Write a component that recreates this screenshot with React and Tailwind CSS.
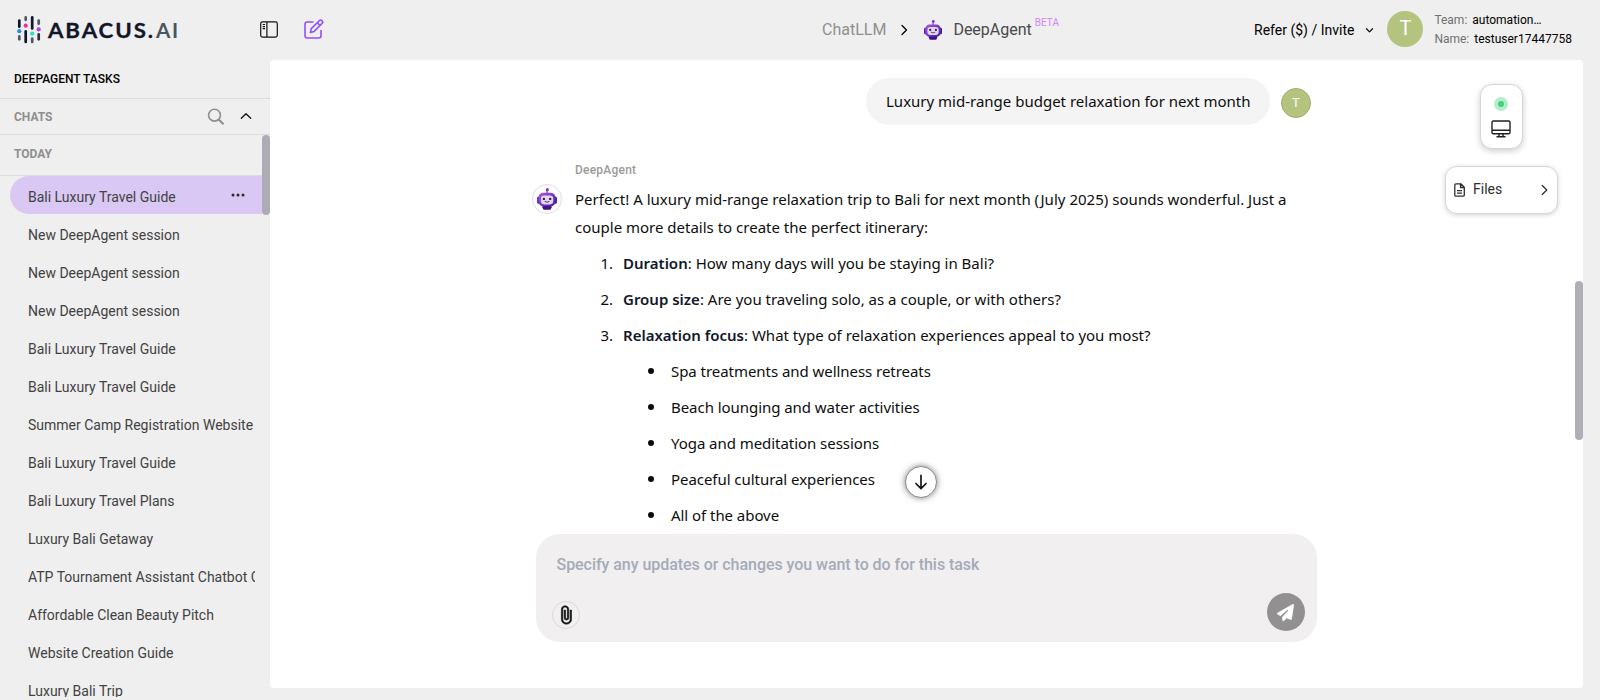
import { FaPaperPlane } from "react-icons/fa6";

const chats = [
  "New DeepAgent session",
  "New DeepAgent session",
  "New DeepAgent session",
  "Bali Luxury Travel Guide",
  "Bali Luxury Travel Guide",
  "Summer Camp Registration Website",
  "Bali Luxury Travel Guide",
  "Bali Luxury Travel Plans",
  "Luxury Bali Getaway",
  "ATP Tournament Assistant Chatbot Creation",
  "Affordable Clean Beauty Pitch",
  "Website Creation Guide",
  "Luxury Bali Trip",
];

const questions = [
  ["Duration", "How many days will you be staying in Bali?"],
  ["Group size", "Are you traveling solo, as a couple, or with others?"],
  ["Relaxation focus", "What type of relaxation experiences appeal to you most?"],
];

const options = [
  "Spa treatments and wellness retreats",
  "Beach lounging and water activities",
  "Yoga and meditation sessions",
  "Peaceful cultural experiences",
  "All of the above",
];

function Logo() {
  return (
    <svg width="164" height="32" viewBox="0 0 164 32" className="shrink-0">
      <g strokeWidth="2.700" strokeLinecap="round" fill="none">
        <path d="M3.300 6.600V12.700" stroke="#12162b" />
        <path d="M3.300 22.400V25.300" stroke="#4d5a66" />
        <path d="M9.700 3.400V5.800" stroke="#4d5a66" />
        <path d="M9.700 17.400V28" stroke="#12162b" />
        <path d="M16.200 3.400V14.500" stroke="#12162b" />
        <path d="M16.200 24.700V28" stroke="#4d5a66" />
        <path d="M22.700 6.600V9.700" stroke="#4d5a66" />
        <path d="M22.700 20.400V25.300" stroke="#2b3342" />
      </g>
      <circle cx="3.300" cy="17.200" r="2.100" fill="#1f8bff" />
      <circle cx="9.700" cy="11.700" r="2.100" fill="#e52fa5" />
      <circle cx="16.200" cy="19.600" r="2.100" fill="#27dfd5" />
      <circle cx="22.700" cy="15.300" r="2.100" fill="#b43cff" />
      <text x="32" y="24" fontFamily="Lato, sans-serif" fontSize="21" fontWeight="700" fill="#12162b" stroke="#12162b" strokeWidth=".3" letterSpacing="1.800" textLength="107" lengthAdjust="spacingAndGlyphs">ABACUS.</text>
      <text x="140" y="24" fontFamily="Lato, sans-serif" fontSize="21" fontWeight="700" fill="#4a5560" letterSpacing="1.800" textLength="24" lengthAdjust="spacingAndGlyphs">AI</text>
    </svg>
  );
}

function Robot({ size }) {
  return (
    <svg width={size} height={size} viewBox="0 0 20 20" className="shrink-0">
      <defs>
        <linearGradient id="robotBody" x1="0" y1="0" x2="1" y2="1">
          <stop offset="0" stopColor="#a855e8" />
          <stop offset="1" stopColor="#4c1aa0" />
        </linearGradient>
      </defs>
      <circle cx="10.300" cy="1.500" r="1.400" fill="#7c34cf" />
      <path d="M10.100 2.500V5" stroke="#5a25a8" strokeWidth="1" />
      <rect x="1" y="7.800" width="3" height="6.500" rx="1.400" fill="#5b21b6" />
      <rect x="16" y="7.800" width="3" height="6.500" rx="1.400" fill="#431496" />
      <path d="M5.800 15.800h8.400v1.800l-1 2.200H6.800l-1-2.200z" fill="#3d1287" />
      <rect x="2.300" y="4.400" width="15.400" height="12.300" rx="4.300" fill="url(#robotBody)" />
      <rect x="4.400" y="6.900" width="11.300" height="8" rx="3" fill="#e2d6ee" />
      <circle cx="7.200" cy="9.900" r="1.100" fill="#35204f" />
      <circle cx="12.900" cy="9.900" r="1.100" fill="#35204f" />
      <path d="M8.200 12.400q1.900 1.300 3.700 0" fill="none" stroke="#35204f" strokeWidth=".8" strokeLinecap="round" />
    </svg>
  );
}

function Chevron({ d, w, h, className }) {
  return (
    <svg width={w} height={h} viewBox={`0 0 ${w} ${h}`} className={className} fill="none" stroke="currentColor" strokeWidth="1.300" strokeLinecap="round" strokeLinejoin="round">
      <path d={d} />
    </svg>
  );
}

function Header() {
  return (
    <header className="flex h-[60px] shrink-0 items-start">
      <div className="flex w-[278px] shrink-0 pt-[14px] pl-[16px]">
        <Logo />
        <svg width="18" height="17" viewBox="0 0 18 17" className="mt-[7px] ml-[80px] shrink-0" fill="none" stroke="#111" strokeWidth="1.200">
          <rect x=".7" y=".9" width="16.600" height="15.200" rx="1.800" />
          <path d="M6.900 1v15M2.700 3.500H5M2.700 5.600H5M2.700 7.700H5" />
        </svg>
      </div>
      <div className="w-[544px] shrink-0 pt-[18px] pl-[25px]">
        <svg width="22" height="22" viewBox="0 0 22 22" fill="none" stroke="#9150fb" strokeWidth="1.600" strokeLinecap="round" strokeLinejoin="round">
          <path d="M10 4H4.200C2.800 4 2 4.800 2 6.200v11.600C2 19.200 2.800 20 4.200 20h11.600c1.400 0 2.200-.8 2.200-2.200v-5.300" />
          <path d="M7.400 14.600l.9-4 7.900-7.900a1.950 1.950 0 0 1 2.800 2.800l-7.900 7.900-3.700 1.200zM14.300 4.700l2.800 2.800" />
        </svg>
      </div>
      <div className="flex h-[60px] w-[432px] shrink-0 items-center text-base leading-5">
        <span className="text-[#8f8f8f]">ChatLLM</span>
        <Chevron w={8} h={12} d="M2 1.500L6.500 6L2 10.500" className="ml-[14px] text-black" />
        <span className="ml-[15px]"><Robot size={20} /></span>
        <span className="ml-[10px] text-[#4a4a4a]">DeepAgent</span>
        <span className="ml-[3px] -mt-[15px] text-[10px] leading-3 text-[#d585fa]">BETA</span>
      </div>
      <div className="flex h-[60px] items-center">
        <span className="text-sm text-black">Refer ($) / Invite</span>
        <Chevron w={9} h={7} d="M1.500 1.800L4.500 4.900L7.500 1.800" className="mt-px ml-[11px] text-[#111]" />
        <span className="mb-[2px] ml-[13px] flex size-[36px] items-center justify-center rounded-full bg-[#b4c47f] pb-[2px] text-[20px] text-white">T</span>
        <div className="ml-[11px] flex flex-col pb-[1px] text-[12px] leading-[19px]">
          <div className="flex gap-[5px]"><span className="text-[#6f6f6f]">Team:</span><span className="text-black">automation…</span></div>
          <div className="flex gap-[5px]"><span className="text-[#6f6f6f]">Name:</span><span className="text-black">testuser17447758</span></div>
        </div>
      </div>
    </header>
  );
}

function Sidebar() {
  return (
    <aside className="flex w-[270px] shrink-0 flex-col overflow-hidden">
      <div className="flex h-[39px] shrink-0 items-center border-b border-[#dcdcdc] pl-[14px] text-[12px] font-medium text-black">DEEPAGENT TASKS</div>
      <div className="flex h-[36px] shrink-0 items-center border-b border-[#dcdcdc] pr-[18px] pl-[14px] text-[12px] font-bold text-[#8e8e8e]">
        CHATS
        <svg width="18" height="18" viewBox="0 0 18 18" className="ml-auto" fill="none" stroke="#8e8e8e" strokeWidth="1.600">
          <circle cx="7.500" cy="7.200" r="5.900" />
          <path d="M11.700 11.500L16.500 16.200" strokeWidth="2" />
        </svg>
        <Chevron w={12} h={8} d="M1.300 6.200L6 1.700L10.700 6.200" className="mb-[2px] ml-[15px] text-[#111]" />
      </div>
      <div className="flex h-[562px] w-full shrink-0 overflow-hidden">
        <div className="flex w-[262px] shrink-0 flex-col">
          <div className="flex h-[41px] shrink-0 items-center border-b border-[#dcdcdc] pb-[3px] pl-[14px] text-[12px] font-bold text-[#8e8e8e]">TODAY</div>
          <div className="ml-[10px] flex h-[38px] shrink-0 items-center rounded-l-full bg-[#d8c8f3] pt-[3px] pr-[17px] pl-[18px] text-sm text-[#424242]">
            Bali Luxury Travel Guide
            <svg width="14" height="4" viewBox="0 0 14 4" className="mb-[4px] ml-auto" fill="#2b2b2b">
              <circle cx="2" cy="2" r="1.500" /><circle cx="7" cy="2" r="1.500" /><circle cx="12" cy="2" r="1.500" />
            </svg>
          </div>
          {chats.map((c, i) => (
            <div key={i} className="mr-[7px] ml-[28px] flex h-[38px] shrink-0 items-center overflow-hidden pt-[3px] text-sm whitespace-nowrap text-[#424242]">{c}</div>
          ))}
        </div>
        <div className="h-[80px] w-[8px] rounded-full bg-[#adacb5]" />
      </div>
    </aside>
  );
}

function Conversation() {
  return (
    <div className="flex h-[474px] flex-col overflow-hidden pl-[263px] text-[15px] text-[#0d0d0d]">
      <div className="flex w-[778px] items-center justify-end pt-[18px]">
        <div className="flex h-[47px] w-[404px] items-center rounded-full bg-[#f4f4f4] pb-px pl-[20px] font-['Noto_Sans',sans-serif] whitespace-nowrap">Luxury mid-range budget relaxation for next month</div>
        <span className="mt-[3px] ml-[11px] flex size-[30px] items-center justify-center rounded-full border border-[#9fac72] bg-[#b4c47f] text-[13px] text-white">T</span>
      </div>
      <div className="mt-[36px] ml-[42px] text-[12px] leading-[18px] font-medium tracking-[0.22px] text-[#9b9b9b]">DeepAgent</div>
      <div className="mt-[6px] flex">
        <span className="-mt-px mr-px -ml-px flex size-[30px] shrink-0 items-center justify-center rounded-full border border-[#dedede]"><Robot size={22} /></span>
        <div className="ml-[12px] font-['Noto_Sans',sans-serif] leading-[28px] whitespace-nowrap">
          <p className="tracking-[0.026px]">Perfect! A luxury mid-range relaxation trip to Bali for next month (July 2025) sounds wonderful. Just a<br /><span className="tracking-normal">couple more details to create the perfect itinerary:</span></p>
          <ol className="mt-[8px] flex flex-col gap-[8px]">
            {questions.map(([title, text], i) => (
              <li key={title} className="flex">
                <span className="w-[38px] text-right">{i + 1}.</span>
                <span className="ml-[10px]"><b className="font-semibold text-[#111827]">{title}</b>: {text}</span>
              </li>
            ))}
          </ol>
          <ul className="mt-[8px] ml-[73px] flex flex-col gap-[8px]">
            {options.map((o) => (
              <li key={o} className="flex items-center">
                <span className="size-[6px] rounded-full bg-[#0d0d0d]" />
                <span className="ml-[17px] tracking-[-0.05px]">{o}</span>
              </li>
            ))}
          </ul>
        </div>
      </div>
    </div>
  );
}

function Composer() {
  return (
    <div className="ml-[265.500px] flex h-[108px] w-[781px] flex-col justify-between rounded-[24px] bg-[#f1eff0] pt-[19px] pr-[12px] pb-[11px] pl-[16px]">
      <div className="pl-[5px] text-base font-medium tracking-[-0.045px] text-[#a4abb8]">Specify any updates or changes you want to do for this task</div>
      <div className="flex items-center justify-between">
        <span className="mt-[5px] flex size-[28px] items-center justify-center rounded-full border border-[#dadada]">
          <svg width="22" height="20" viewBox="0 0 24 24" preserveAspectRatio="none" fill="#111" stroke="#111" strokeWidth=".7">
            <path d="M16.500 6v11.500c0 2.210-1.790 4-4 4s-4-1.790-4-4V5a2.500 2.500 0 0 1 5 0v10.500c0 .55-.45 1-1 1s-1-.45-1-1V6H10v9.500a2.500 2.500 0 0 0 5 0V5c0-2.210-1.790-4-4-4S7 2.790 7 5v12.500c0 3.040 2.460 5.500 5.500 5.500s5.500-2.460 5.500-5.500V6h-1.500z" />
          </svg>
        </span>
        <span className="flex size-[38px] items-center justify-center rounded-full bg-[#929091] text-white"><FaPaperPlane size={17} /></span>
      </div>
    </div>
  );
}

function FloatingTools() {
  return (
    <>
      <div className="absolute top-[24px] left-[1210px] flex h-[65px] w-[43px] flex-col items-center rounded-[12px] border border-[#d6d6d6] bg-white pt-[12px] pr-[2px] shadow-[0_2px_6px_rgba(0,0,0,0.2)]">
        <span className="flex size-[14px] items-center justify-center rounded-full bg-[#b5edcb]"><span className="size-[6px] rounded-full bg-[#41d07c]" /></span>
        <svg width="20" height="18" viewBox="0 0 20 18" className="mt-[9px]" fill="none" stroke="#222" strokeWidth="1.400">
          <rect x="1" y="1" width="18" height="12.800" rx="1.400" />
          <path d="M1 10.300h18M8 14v2.500M12 14v2.500M5.500 16.800h9" />
        </svg>
      </div>
      <div className="absolute top-[106px] left-[1175px] flex h-[48px] w-[113px] items-center rounded-[12px] border border-[#d6d6d6] bg-white pr-[9px] pl-[8px] text-[#2e2e2e] shadow-[0_1px_5px_rgba(0,0,0,0.18)]">
        <svg width="11" height="14" viewBox="0 0 11 14" fill="none" stroke="currentColor" strokeWidth="1.300" strokeLinejoin="round">
          <path d="M2 .8h4.800l3.500 3.500V12c0 .7-.4 1.200-1.200 1.200H2c-.8 0-1.200-.5-1.200-1.200V2C.8 1.200 1.200.8 2 .8zM6.500 1v3.500H10M3 7.700h5M3 10.200h5" />
        </svg>
        <span className="ml-[8px] pb-[2px] text-sm">Files</span>
        <Chevron w={7} h={12} d="M1.200 1.500L5.800 6L1.200 10.500" className="ml-auto" />
      </div>
      <div className="absolute top-[406px] left-[635px] flex size-[32px] items-center justify-center rounded-full border border-[#8a8a8a] bg-white shadow-[0_0_6px_rgba(0,0,0,0.5)]">
        <svg width="14" height="16" viewBox="0 0 16 18" fill="none" stroke="#111" strokeWidth="1.900" strokeLinecap="round" strokeLinejoin="round">
          <path d="M8 1.500v15M2.200 10.700L8 16.500l5.800-5.800" />
        </svg>
      </div>
      <div className="absolute top-[221px] right-0 h-[159px] w-[8px] rounded-full bg-[#b0afb8]" />
    </>
  );
}

export default function App() {
  return (
    <div className="flex h-[700px] w-[1600px] flex-col overflow-hidden bg-[#efefef] font-[Roboto,sans-serif]">
      <Header />
      <div className="flex h-[640px]">
        <Sidebar />
        <main className="relative h-[628px] w-[1312.500px] shrink-0 overflow-hidden rounded-[4px] bg-white">
          <Conversation />
          <Composer />
          <FloatingTools />
        </main>
      </div>
    </div>
  );
}
